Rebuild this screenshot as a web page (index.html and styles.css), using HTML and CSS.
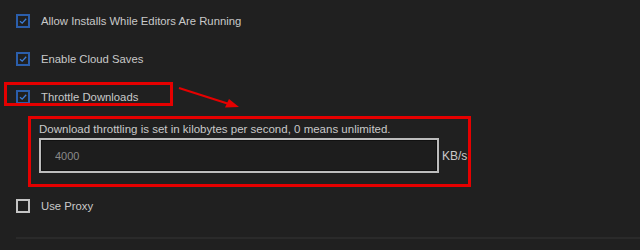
FILE: index.html
```html
<!DOCTYPE html>
<html lang="en">
<head>
    <meta charset="UTF-8">
    <meta name="viewport" content="width=device-width, initial-scale=1.0">
    <title>settings</title>
    <link rel="stylesheet" href="styles.css">
</head>
<body>
    <div class="settings">
        <label class="option">
            <span class="check checked">
                <svg viewBox="0 0 10 10" width="10" height="10"><path d="M2 5.2 L4.2 7.2 L8.2 2.8" /></svg>
            </span>
            <span class="option-label">Allow Installs While Editors Are Running</span>
        </label>
        <label class="option">
            <span class="check checked">
                <svg viewBox="0 0 10 10" width="10" height="10"><path d="M2 5.2 L4.2 7.2 L8.2 2.8" /></svg>
            </span>
            <span class="option-label">Enable Cloud Saves</span>
        </label>
        <label class="option">
            <span class="check checked">
                <svg viewBox="0 0 10 10" width="10" height="10"><path d="M2 5.2 L4.2 7.2 L8.2 2.8" /></svg>
            </span>
            <span class="option-label">Throttle Downloads</span>
        </label>

        <div class="throttle-panel">
            <p class="throttle-note">Download throttling is set in kilobytes per second, 0 means unlimited.</p>
            <div class="throttle-row">
                <input type="text" class="throttle-input" placeholder="4000">
                <span class="unit">KB/s</span>
            </div>
        </div>

        <label class="option">
            <span class="check"></span>
            <span class="option-label">Use Proxy</span>
        </label>

        <div class="divider"></div>
    </div>

    <!-- annotations drawn over the screenshot -->
    <div class="mark-box"></div>
    <svg class="mark-arrow" width="70" height="30" viewBox="0 0 70 30">
        <line x1="2" y1="2" x2="52" y2="18" />
        <polygon points="62,21 48,21.5 52,13" />
    </svg>
</body>
</html>
```

FILE: styles.css
```css
body {
  margin: 0;
  background-color: #202020;
  color: #c9c9c9;
  font-family: "Liberation Sans", Arial, sans-serif;
  font-size: 12px;
}

.settings {
  padding: 2px 0 0 16px;
}

.option {
  display: flex;
  align-items: center;
  gap: 11px;
  height: 38px;
}

.check {
  box-sizing: border-box;
  width: 14px;
  height: 14px;
  border: 2px solid #c4c4c4;
  display: flex;
  align-items: center;
  justify-content: center;
}

.check.checked {
  border-color: #2b5eab;
}

.check svg path {
  fill: none;
  stroke: #3d7fd9;
  stroke-width: 1.3;
}

.option-label {
  font-size: 11.3px;
}

/* throttle settings panel, outlined in red */
.throttle-panel {
  width: 429px;
  margin-left: 12px;
  border: 3px solid #e50000;
  padding: 3px 0 11px 8px;
}

.throttle-note {
  margin: 0;
  font-size: 11.5px;
  line-height: 14px;
}

.throttle-row {
  display: flex;
  align-items: center;
  gap: 3px;
  margin-top: 2px;
}

.throttle-input {
  box-sizing: border-box;
  width: 400px;
  height: 35px;
  background-color: #1d1d1d;
  border: 2px solid #bdbdbd;
  box-shadow: inset 0 0 0 1px #111;
  padding: 0 14px;
  color: #8a8a8a;
  font-family: "Liberation Sans", Arial, sans-serif;
  font-size: 11px;
  outline: none;
}

.throttle-input::placeholder {
  color: #8a8a8a;
}

.unit {
  font-size: 12px;
}

.divider {
  height: 2px;
  background-color: #2a2a2a;
  margin-top: 12px;
}

.mark-box {
  position: absolute;
  left: 4px;
  top: 82px;
  width: 163px;
  height: 18px;
  border: 3px solid #e50000;
}

.mark-arrow {
  position: absolute;
  left: 177px;
  top: 86px;
}

.mark-arrow line {
  stroke: #e50000;
  stroke-width: 2;
}

.mark-arrow polygon {
  fill: #e50000;
}
```
